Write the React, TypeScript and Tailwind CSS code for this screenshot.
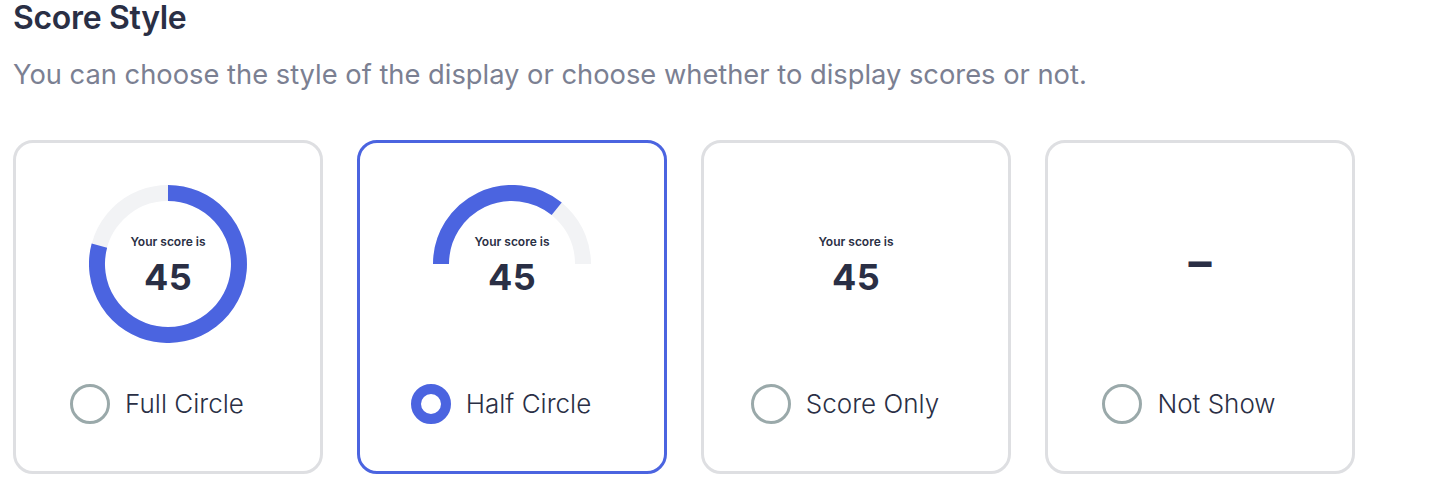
const BLUE = "#4b64e0";
const TRACK = "#f2f3f5";

type Variant = "full" | "half" | "score" | "none";

const options: { id: Variant; label: string }[] = [
  { id: "full", label: "Full Circle" },
  { id: "half", label: "Half Circle" },
  { id: "score", label: "Score Only" },
  { id: "none", label: "Not Show" },
];

function ScoreText() {
  return (
    <div className="relative flex flex-col items-center pt-[49px]">
      <span className="text-[12px] leading-4 font-semibold text-[#2a2f45]">Your score is</span>
      <span className="mt-[7px] text-[36px] leading-10 font-bold tracking-[0.01em] text-[#2a2f45]">45</span>
    </div>
  );
}

function Visual({ variant }: { variant: Variant }) {
  if (variant === "none") {
    return (
      <div className="flex h-[158px] w-[158px] items-center justify-center">
        <span className="-mt-[6px] text-[46px] leading-10 font-bold text-[#2a2f45]">–</span>
      </div>
    );
  }
  return (
    <div className="relative h-[158px] w-[158px]">
      {variant === "full" && (
        <svg className="absolute inset-0" width="158" height="158" viewBox="0 0 158 158">
          <circle cx="79" cy="79" r="71" fill="none" stroke={TRACK} strokeWidth="16" />
          <path d="M79 8 A71 71 0 1 1 10.4 60.6" fill="none" stroke={BLUE} strokeWidth="16" />
        </svg>
      )}
      {variant === "half" && (
        <svg className="absolute inset-0" width="158" height="158" viewBox="0 0 158 158">
          <path d="M8 79 A71 71 0 0 1 150 79" fill="none" stroke={TRACK} strokeWidth="16" />
          <path d="M8 79 A71 71 0 0 1 123.7 23.8" fill="none" stroke={BLUE} strokeWidth="16" />
        </svg>
      )}
      <ScoreText />
    </div>
  );
}

export default function App() {
  const selected: Variant = "half";

  return (
    <div className="min-h-screen bg-white px-[13px] font-['Inter',sans-serif]">
      <h2 className="text-[32px] leading-[36px] font-semibold tracking-[-0.01em] text-[#2a2f45]">Score Style</h2>
      <p className="mt-[21px] text-[27.3px] leading-[36px] text-[#7b8092]">
        You can choose the style of the display or choose whether to display scores or not.
      </p>

      <div className="mt-[47px] flex gap-[34px]">
        {options.map((o) => {
          const active = o.id === selected;
          return (
            <div
              key={o.id}
              className={
                active
                  ? "flex h-[334px] w-[310px] flex-col items-center rounded-[20px] border-[3px] border-[#4b64e0] bg-white pt-[42px]"
                  : "flex h-[334px] w-[310px] flex-col items-center rounded-[20px] border-[3px] border-[#dedfe2] bg-white pt-[42px]"
              }
            >
              <Visual variant={o.id} />
              <div className="mt-[41px] flex items-center gap-[15px] pr-[22px]">
                {active ? (
                  <span className="h-[40px] w-[40px] rounded-full border-[10px] border-[#4b64e0] bg-white" />
                ) : (
                  <span className="h-[40px] w-[40px] rounded-full border-[3px] border-[#9aa9aa] bg-white" />
                )}
                <span className="text-[26px] leading-8 font-light text-[#2a2f45]">{o.label}</span>
              </div>
            </div>
          );
        })}
      </div>
    </div>
  );
}
